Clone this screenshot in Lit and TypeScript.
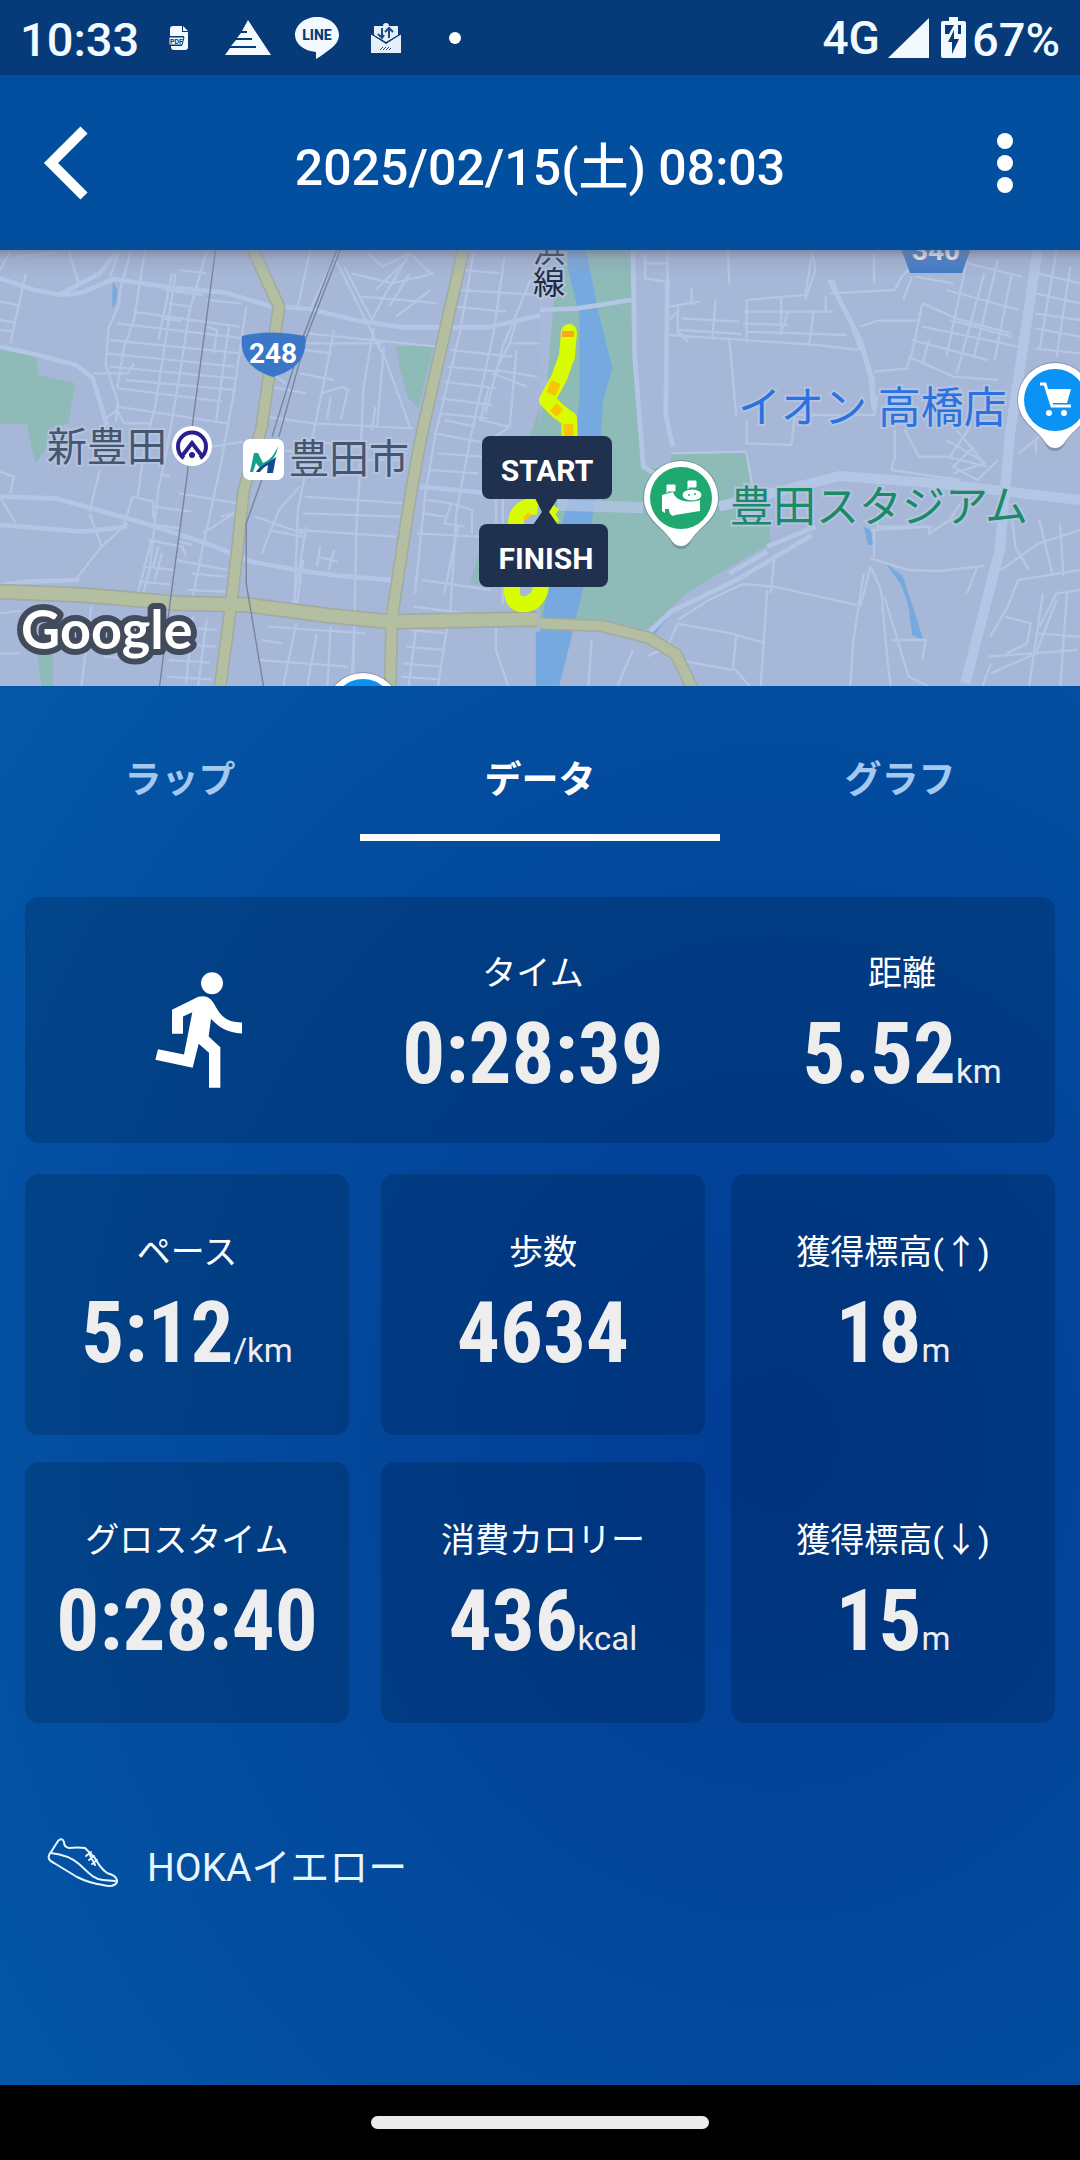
import { LitElement, css, html, svg, nothing } from "lit";
import { customElement, property } from "lit/decorators.js";

const statusIcons = [
  html`<svg width="22" height="26" viewBox="0 0 22 26" role="img" aria-label="PDF">
    <path d="M5 1h9v6h6v15a3 3 0 0 1-3 3H6a3 3 0 0 1-3-3v-1h11l2-10H2V4a3 3 0 0 1 3-3z" fill="#f2faff" />
    <path d="M15 1l5 5h-5z" fill="#f2faff" />
    <path d="M1 12h15l-2 8H1z" fill="#f2faff" stroke="#063a78" stroke-width="1" />
    <text x="2" y="19" font-size="7" font-weight="700" fill="#063a78">PDF</text>
  </svg>`,
  html`<svg width="46" height="35" viewBox="0 0 46 35" aria-hidden="true">
    <path d="M23 0l23 35H0l5-7h26v-2H6l5-6h16v-2H12l4-5h6v-2h-5z" fill="#f2faff" />
  </svg>`,
  html`<svg width="44" height="42" viewBox="0 0 44 42" role="img" aria-label="LINE">
    <path d="M22 0c12 0 22 8 22 18 0 8-7 13-14 18-4 3-7 5-9 6v-7C9 34 0 27 0 18 0 8 10 0 22 0z" fill="#f2faff" />
    <text x="22" y="23" text-anchor="middle" font-size="14" font-weight="800" fill="#063a78">LINE</text>
  </svg>`,
  html`<svg width="30" height="30" viewBox="0 0 30 30" aria-hidden="true">
    <path d="M12 3a3 3 0 0 1 6 0h9v9l-12 7L3 12V3z" fill="#e4effa" />
    <path d="M0 11l15 10 15-10v19H0z" fill="#e4effa" />
    <path d="M0 11l15 9 15-9" fill="none" stroke="#063a78" stroke-width="1" />
    <path d="M11 5v9m-4-3l4 4 2-3M18 15V6m-4 3l4-4 4 4" fill="none" stroke="#1f4a80" stroke-width="2" />
    <path d="M9 27l3-3m0 3l3-3m0 3l3-3m0 3l2-2" stroke="#1f4a80" stroke-width="1" />
  </svg>`,
  html`<svg width="12" height="12" viewBox="0 0 12 12" aria-hidden="true"><circle cx="6" cy="6" r="6" fill="#fff" /></svg>`,
];

const pin = (x: number, y: number, color: string, glyph: unknown = nothing) => svg`
  <g transform="translate(${x} ${y})">
    <path d="M0 51c-5 0-8-3-11-9C-17 30-38 23-38 0a38 38 0 0 1 76 0c0 23-21 30-27 42-3 6-6 9-11 9z" fill="#43536f" opacity=".35" />
    <path d="M0 48c-5 0-8-3-12-9C-20 28-37 20-37 0a37 37 0 0 1 74 0c0 20-17 28-25 39-4 6-7 9-12 9z" fill="#fff" />
    <circle r="31" fill="${color}" />
    ${glyph}
  </g>`;

const westTile = svg`
  <svg x="0" y="240" width="540" height="450" viewBox="0 0 1568 1350" preserveAspectRatio="none">
    <g class="park">
      <path d="M0 325l60 15 48 15v50l110 25-20 120-50 15-15 60-30 45-10-45-15-72H0z" />
      <path d="M1150 318h110l-45 185-30-30-22-80z" />
      <path d="M1568 500l-30 90h30zM1365 1030l25-90v95zM108 1240h45v110h-30z" />
    </g>
    <path d="M327 125l14 25-5 40-10 15z" class="water" />
    <path class="lane" d="M30 35L0 90M75 100L30 310M200 35L230 135M345 35l-25 75M380 35l-30 110-5 50-30 70-8 110 35 110-5 60M0 185l55 10M0 240l45 8M0 270l40 5M50 50l110-12M420 35l-30 200-30 90-20 120M510 100l-35 240-25 160-30 120-20 150M600 35l-50 180-30 200-40 240-20 90-25 240-20 80M715 200l-35 250-40 230-55 260-25 130M665 260l-15 110-22 170M340 250l370 45M320 300l380 40M312 340l370 40M320 380l360 35M365 420l320 30M345 445l300 40M340 500l320 50M385 215l310 45M490 190l60 10M470 235l55 8M520 90l80 10M480 150l110 15M600 180l100 10M600 260l30 10-10 70M270 400l100 0 20-30M300 540l40-30 20 40h80" />
    <path class="lane" d="M0 695l40 15-10 50M0 770l45 80M290 690l-30 125M260 820l35 100-80 105M370 850l-75 70M385 770l-25 85M385 770l60 15v50M465 700l30 10M445 800l110 15M420 850l100 15M430 900l100 20 10 30M440 900l-40 160M460 920l-15 60M415 980l90 10M405 1025l90 8M470 940l-20 80M510 960l150 30M555 1000l100 10M545 1050l110 5M520 905l40 10M0 1120l60-8M0 1240h60M265 1100l-30 250M240 1190l240 20M300 1250l140 12M500 1160l130 10M495 1210l130 10M490 1260l120 8M485 1310l130 8M560 1130l-20 200M600 1140l-25 200M460 300l40-200M555 630l150-25M640 830l70-20M520 760l170 30M590 880l90-60" />
    <path class="lane" d="M900 35l-35 165M960 80l-60 130M1000 80l85 170M970 50l150 310 70 200M1080 240l40-80 70-120 60 60M1020 100l120 30 120-30M1050 170l120 10 100 10M1090 150l80-80M1130 200l60-100M1150 230l100-80M1190 40l-80 40-40-40M970 270l-30 160-40 200-35 180-10 280M1085 265l-30 180-10 250-10 170-10 480M890 280l380 40M1110 310h-220M885 330l80 10M870 400l100 20M935 460l60-20 15 10-20 90M960 470l-10 70M1115 320l-20 240M1090 500l-10 70M780 440l110 20M770 530l140 20 290 15M790 400l40 30M760 620l120 20M880 600l300 40M885 660h290M885 770l290 20M880 820l280 10M870 870l280 20M760 940l50-130 60-70M780 870l100 20M740 830l140 50M890 860l-40 240M880 960l-20 150M930 920l-10 60M970 930l-15 60M920 950l60 15M780 1160l280 20M760 1200l60 10M750 1260l260 20M860 1150l-40 200M920 1180l-30 170M960 1160l-10 190M1030 1140l-10 210" />
    <path class="lane" d="M1375 40l-40 240-70 300-30 180-30 300M1465 50l-30 220-70 330-40 220-20 340M1540 120l-80 200-50 200M1330 150l240 15M1350 90l100 10M1320 200l150 15M1310 330l180 20M1300 380l150 15M1290 425l150 20M1280 475l150 20M1275 520l140 15M1500 240l-20 70h88M1480 310l-40 80 120 20M1430 400l100 40M1500 330l-20 230-70 50M1420 440l-25 100 80 20M1380 560l-90-20M1260 580l160 30M1270 640l130 10M1250 690l140 10M1240 780l70 10 60 20v70M1310 790l-20 60 60 10M1230 820l60 10M1210 880l180 10M1225 1020l200 30M1330 860l-40 200M1190 1170l110 10M1180 1220l110 10M1170 1270l110 10M1165 1310l110 8M1210 1150l-25 200M1300 1150l-30 200M1440 1160v70l40 120M1200 1100l230 30M1440 750v100M1460 740v350" />
    <g class="street">
      <path d="M0 115l100 35 80 15 60-8 90-40 160 25 160 15 130 40 120 10 140 35 130 20h250l250-60M0 320l110 25 110 30 50 40 40 140M170 165L290 100l45-60" />
      <path d="M0 770l160 5 90 25 170 50 180 60 130 55 160 30 90 12 180 15M0 855l240 20 130-15M0 1035l80-10 150-5M1220 740l200 20" />
    </g>
    <g class="highway-edge">
      <path d="M735 30l75 170-50 360-52 190-35 330-35 270" />
      <path d="M1345 30l-50 230-72 330-30 170-55 370-5 220" />
      <path d="M0 1055l240 10 280 25 200 5 220 30 190 20 430-8" stroke-width="48" />
    </g>
    <g class="highway">
      <path d="M735 30l75 170-50 360-52 190-35 330-35 270" />
      <path d="M1345 30l-50 230-72 330-30 170-55 370-5 220" />
      <path d="M0 1055l240 10 280 25 200 5 220 30 190 20 430-8" stroke-width="38" />
    </g>
    <path class="rail" d="M626 30l-68 530-15 150-47 360-34 280" />
    <path class="rail" d="M978 30L880 290l-90 300M988 30L890 290l-80 300M770 690l-55 160v180l52 320" />
    <path d="M1556 1175h12v175h-12z" class="water" />
  </svg>`;

const eastTile = svg`
  <svg x="540" y="240" width="540" height="450" viewBox="0 0 1568 1350" preserveAspectRatio="none">
    <g class="park">
      <path d="M60 30h205l5 320 25 330 85 10V640h225l15 120 40 40 10 110-240 145-120 115-60-15-180-20H0V560l40-360z" />
    </g>
    <path d="M0 150h40l-20 300-20 60z" fill="#a8b9d9" />
    <path class="water" d="M82 30h52l32 170 44 185-28 100-8 200-22 150-25 200-34 150-40 165H0v-180l42-240 45-160 28-300v-240L80 80z" />
    <path class="water" d="M940 860l20 10 8 45h-15zM1003 968l50 40 35 110 25 82-32-15-12-90-20-60zM310 1180l65-50-40 50z" />
    <path class="lane" d="M305 40v75l60 10M370 30v90M310 70h60M375 200l90-15M440 145v50M400 200v75l30 30M375 240l30-30M510 180l-10 120M410 235l170 10M405 270l180 12M600 180v130M590 215h260M700 175v110M600 180l170-15 20-120M590 250l130 5M795 210l-15 110M830 170v45h20M770 180l30-90-10-60M545 30l5 100M850 120l70 180 10 30M375 285l430 30 120 15M600 275l290 10M720 215l-15 50" />
    <path class="lane" d="M970 40v90M840 160l190-10 20-40 60-60M930 260l50-18h125M1110 190l-30 150-15 40M1110 190l110 50 150 40M1080 300l220 60M1080 110l-25 70M1240 60l-60 290M1290 100l-80 300M1330 60l-70 290M1370 100l-50 260M1180 150l210 60M1190 240l180 50M1130 300l-20 70M1070 350l130 60 130 10M1110 260l280 60M1200 60l200 50M1090 110l110 20M1500 30l-50 300M1540 80l-40 270M1568 130l-120-30M1568 190l-130-30M1568 240l-130-20M1568 290l-130-25M1568 340l-130-15" />
    <path class="lane" d="M550 300l20 230M600 540v70l130 5 10-90h230l10-60M930 300l40 120v90M970 395l100-10M1030 570v90M1060 570l40 80h80l120 30M1020 690l200 30M1030 650l-10 40M1250 560l-60 90M1180 600l100 60M1210 570l80 100-90 30M1260 620l-60 60 70 40 60-60M1390 640l60-50M1440 600v40M380 640l220-5M600 640l20 120M640 770l140-25M980 820v40h150v20l60-40 30-50M960 870l180-10" />
    <path class="lane" d="M960 955l110 35 90 3 130-15M960 980l30 70 20 220 10 80M1000 1070l70 240 60 30M930 1100l30-120M1270 980l-30 80M1500 1060l-50 100M1370 830l10 90 40 70M1450 840l40 170M1510 850l10 160M1568 870l-120 40-110 80M1568 990l-180 30-30 80-50 90M1350 1130l75 20-10 60-60 30M1500 1060l68-10M1440 1180l128 10M1300 1250l260-20M1310 1300l130-60 60-160M1460 1060l-40 280M1530 1060l-20 290M1020 1200h100l-10 60M1280 1350l30-80" />
    <path class="lane" d="M400 1140l90-60 100-48 90 8 240 55M395 1150l160 30 100 30M570 1190l-10 90 50 60M400 1260l160 30M400 1150l-30 70-60 30M270 1230l-50 120M150 1200l-10 150M660 1050l-20 300M680 960l-10 100M940 1000l-30 200-10 150M970 870v80" />
    <g class="street">
      <path d="M0 210l110-5 155-25M270 30l5 320 25 330 40 25M370 120l-5 400 20 100M840 120l90 180 30 110 10 100" />
      <path d="M660 935l-110 65M320 1175l60-60 200-100 210-130M660 920l140-60" />
      <path d="M50 795l250 8" stroke-width="34" opacity=".75" />
      <path d="M520 800l350-92 280 22 418 50" stroke-width="30" />
      <path d="M1445 30l-80 550-30 350-100 400" stroke-width="30" />
    </g>
    <path class="highway-edge" d="M0 1150l180 8 135 35 80 50 50 107" stroke-width="46" />
    <path class="highway" d="M0 1150l180 8 135 35 80 50 50 107" stroke-width="36" />
  </svg>`;

@customElement("course-map")
export class CourseMap extends LitElement {
  static styles = css`
    :host { display: block; background: #a6b7d7; }
    .map { display: block; width: 100%; height: 436px; font-family: Roboto, "Noto Sans CJK JP", sans-serif; }
    .park { fill: #8ebab8; }
    .water { fill: #76a9df; }
    .lane { fill: none; stroke: #b5c7e4; stroke-width: 7; }
    .street { fill: none; stroke: #b3c6e5; stroke-width: 14; stroke-linejoin: round; }
    .highway-edge { fill: none; stroke: #a2ab9f; stroke-width: 38; stroke-linejoin: round; }
    .highway { fill: none; stroke: #b4bea0; stroke-width: 29; stroke-linejoin: round; }
    .rail { fill: none; stroke: #75849f; stroke-width: 4; }
    .place { font-size: 40px; paint-order: stroke; stroke: #b3c3e0; stroke-width: 4px; }
    .large { font-size: 43px; }
    .road { font-size: 32px; }
    .shield { font-size: 28px; font-weight: 700; fill: #fff; }
    .flag { font-size: 30px; font-weight: 700; fill: #fff; }
    .google { font-family: Lato, sans-serif; font-size: 54px; font-weight: 700; fill: #fff; paint-order: stroke; stroke: #424b5b; stroke-width: 12px; stroke-linejoin: round; }
  `;

  render() {
    return html`<svg class="map" viewBox="0 250 1080 436" preserveAspectRatio="xMidYMid slice" role="img" aria-label="コースマップ">
      <defs>
        <linearGradient id="shade" x1="0" y1="0" x2="0" y2="1">
          <stop offset="0" stop-color="#6a7088" stop-opacity=".65" />
          <stop offset=".35" stop-color="#8a8fa8" stop-opacity=".3" />
          <stop offset="1" stop-color="#9aa3bf" stop-opacity="0" />
        </linearGradient>
      </defs>
      ${westTile} ${eastTile}

      <path d="M242 336q31-7 63 0c3 22-10 35-32 41-20-6-34-19-31-41z" fill="#3a77c8" />
      <text class="shield" x="273" y="363" text-anchor="middle">248</text>
      <path d="M898 240h76l-12 33h-52z" fill="#3a77c8" />
      <text class="shield" x="936" y="260" text-anchor="middle">340</text>

      <g fill="none" stroke-width="16" stroke-linejoin="round">
        <path d="M569 332l-2 24-8 22-12 22 11 11 11 8 1 26" stroke="#d8fc02" stroke-linecap="round" />
        <path d="M538 507c-13-2-21 4-22 15l-4 70c1 14 12 14 20 10 6-4 9-9 9-19" stroke="#d8fc02" />
        <path d="M556 507l-5 7 5 9" stroke="#d8fc02" stroke-width="8" />
        <path d="M568 331v6" stroke="#ffa61a" stroke-width="12" />
        <path d="M556 382l-5 12M553 407l7 6M568 424l1 12" stroke="#ffb808" stroke-width="10" opacity=".8" />
        <path d="M524 519l6-5" stroke="#ffc400" stroke-width="4" />
      </g>

      <g fill="#20304f">
        <path d="M535 498h23l-9 14 9 13h-25l9-13z" />
        <rect x="482" y="436" width="130" height="63" rx="8" />
        <rect x="479" y="524" width="129" height="63" rx="8" />
      </g>
      <text class="flag" x="547" y="481" text-anchor="middle">START</text>
      <text class="flag" x="546" y="569" text-anchor="middle">FINISH</text>

      <text class="place" x="47" y="461" fill="#47566f">新豊田</text>
      <circle cx="192" cy="446" r="20" fill="#fff" />
      <path d="M184 458a14 14 0 1 1 16 0M182 456l10-13 10 13" fill="none" stroke="#2b1f8f" stroke-width="4" />
      <circle cx="192" cy="455" r="3" fill="#2b1f8f" />
      <rect x="243" y="439" width="41" height="41" rx="7" fill="#fff" />
      <path d="M250 472l4-19h4l5 10c7-3 12-9 15-17-1 10-7 17-18 22l-4-5-3 9z" fill="#14a08a" />
      <path d="M256 472c3-6 9-7 20-15l-3 16h-6l1-8c-4 2-6 4-8 7z" fill="#15488f" />
      <text class="place" x="289" y="473" fill="#47566f">豊田市</text>
      <text class="place road" x="533" y="262" fill="#1c2a42">浜</text>
      <text class="place road" x="533" y="294" fill="#1c2a42">線</text>

      <text class="place large" x="738" y="423" fill="#2b72e0">イオン 高橋店</text>
      ${pin(1055, 400, "#0a93f5", svg`
        <path d="M-15-16h5l7 22h19" fill="none" stroke="#fff" stroke-width="3" />
        <path d="M-9-11h25L12 3H-5z" fill="#fff" />
        <circle cx="-6" cy="13" r="3" fill="#fff" /><circle cx="9" cy="13" r="3" fill="#fff" />`)}
      <text class="place large" x="730" y="522" fill="#1b8a68">豊田スタジアム</text>
      ${pin(681, 498, "#1fa971", svg`
        <path d="M-19-3l11-3c2 7 10 12 27 8v11L-6 17c-2 2-6 0-6-6h-4v4l-3-2z" fill="#fff" />
        <ellipse cx="11" cy="-3" rx="10" ry="6" fill="#fff" stroke="#1fa971" stroke-width="1" />
        <path d="M-14-5v-8h8v6h-7M7-9v-8h8v6h-7" fill="#fff" stroke="#fff" stroke-width="1" />
        <circle cx="8" cy="-3" r="1" fill="#1fa971" /><circle cx="14" cy="-4" r="1" fill="#1fa971" />`)}
      ${pin(363, 710, "#0a93f5")}

      <text class="google" x="21" y="649">Google</text>
      <rect x="-400" y="250" width="1880" height="28" fill="url(#shade)" />
    </svg>`;
  }
}

@customElement("stat-item")
export class StatItem extends LitElement {
  @property() label = "";
  @property() value = "";
  @property() unit = "";

  static styles = css`
    :host { display: flex; flex-direction: column; align-items: center; gap: 12px; }
    .label { font-size: 34px; line-height: 50px; color: #fff; white-space: nowrap; }
    .value { display: flex; align-items: baseline; height: 88px; font: 700 85px/88px "Roboto Condensed", "Liberation Sans Narrow", Roboto, sans-serif; color: #eee; }
    .unit { font: 400 33px/33px Roboto, sans-serif; color: #eee; }
  `;

  render() {
    return html`<div class="label">${this.label}</div>
      <div class="value">${this.value}${this.unit ? html`<span class="unit">${this.unit}</span>` : nothing}</div>`;
  }
}

@customElement("app-root")
export class AppRoot extends LitElement {
  @property() activeTab = "データ";

  static styles = css`
    :host { display: block; }
    * { box-sizing: border-box; }
    .screen { display: flex; flex-direction: column; min-height: 100vh; background: #034f9f; color: #fff; font-family: Roboto, "Noto Sans CJK JP", sans-serif; }
    .status { display: flex; align-items: center; justify-content: space-between; height: 75px; padding: 0 20px; background: #063a78; color: #f2faff; }
    .group { display: flex; align-items: center; }
    .clock { font-size: 47px; line-height: 54px; font-weight: 500; padding-top: 4px; margin-right: 5px; }
    .slot { display: flex; justify-content: center; width: 69px; }
    .network { font-size: 46px; line-height: 54px; font-weight: 500; margin-right: 8px; }
    .signal { margin-right: 12px; }
    .battery { margin-right: 6px; }
    .percent { font-size: 47px; line-height: 54px; font-weight: 500; padding-top: 4px; }
    .header { display: grid; grid-template-columns: 72px 1fr 72px; align-items: center; height: 175px; padding: 0 38px; }
    .title { margin: 0; padding-top: 10px; font-size: 50px; line-height: 60px; font-weight: 500; text-align: center; white-space: nowrap; }
    .icon-button { display: flex; align-items: center; height: 96px; padding: 0; border: 0; background: none; }
    .more { justify-content: flex-end; }
    .content { flex: 1; background: radial-gradient(ellipse 95% 85% at 72% 54%, #013c94, #034d9f 65%, #0458a8); }
    .tabs { display: grid; grid-template-columns: repeat(3, 1fr); }
    .tab { padding: 70px 0 28px; border: 0; border-bottom: 7px solid transparent; background: none; font: 700 37px/50px Roboto, "Noto Sans CJK JP", sans-serif; color: #a4c8f0; }
    .tab.active { color: #fff; border-color: #fff; }
    .panel { padding: 56px 25px 0; }
    .card { border-radius: 14px; background: rgba(0, 8, 28, .19); }
    .summary { display: grid; grid-template-columns: 350fr 316fr 58fr 306fr; align-items: center; padding: 51px 0 45px; margin-bottom: 31px; }
    .summary .distance { grid-column: 4; }
    .runner { justify-self: center; margin: 14px 4px 0 0; }
    .stats { display: grid; grid-template-columns: 1fr 32px 1fr 26px 1fr; row-gap: 27px; }
    .stat { padding: 53px 0 58px; }
    .first { grid-column: 1; }
    .second { grid-column: 3; }
    .climb { grid-column: 5; grid-row: 1 / span 2; display: flex; flex-direction: column; justify-content: space-between; }
    .shoe { display: flex; align-items: center; gap: 29px; padding: 114px 21px 60px; font-size: 39px; line-height: 60px; color: #e8f6ff; }
    .gesture { display: flex; align-items: center; justify-content: center; height: 75px; background: #000; }
    .pill { width: 338px; height: 13px; border-radius: 7px; background: #ebebeb; }
  `;

  private select(tab: string) {
    this.activeTab = tab;
  }

  render() {
    return html`<div class="screen">
      <div class="status">
        <div class="group">
          <span class="clock">10:33</span>
          ${statusIcons.map((icon) => html`<span class="slot">${icon}</span>`)}
        </div>
        <div class="group">
          <span class="network">4G</span>
          <svg class="signal" width="41" height="40" viewBox="0 0 41 40" aria-hidden="true"><path d="M41 0v40H0z" fill="#f2faff" /></svg>
          <svg class="battery" width="25" height="41" viewBox="0 0 25 41" aria-hidden="true">
            <path d="M8 0h9v4h6a2 2 0 0 1 2 2v33a2 2 0 0 1-2 2H2a2 2 0 0 1-2-2V6a2 2 0 0 1 2-2h6z" fill="#f2faff" />
            <path d="M4 8h9l-5 9H4zM15 8h5v9h-3V8zM13 13v9h5l-7 15v-12H7z" fill="#063a78" />
          </svg>
          <span class="percent">67%</span>
        </div>
      </div>

      <header class="header">
        <button class="icon-button" aria-label="戻る">
          <svg width="56" height="76" viewBox="0 0 56 76" aria-hidden="true"><path d="M46 5L13 38l33 33" fill="none" stroke="#fff" stroke-width="10" /></svg>
        </button>
        <h1 class="title">2025/02/15(土) 08:03</h1>
        <button class="icon-button more" aria-label="メニュー">
          <svg width="72" height="60" viewBox="0 0 72 60" fill="#fff" aria-hidden="true"><circle cx="35" cy="8" r="8" /><circle cx="35" cy="30" r="8" /><circle cx="35" cy="52" r="8" /></svg>
        </button>
      </header>

      <course-map></course-map>

      <main class="content">
        <div class="tabs" role="tablist">
          ${["ラップ", "データ", "グラフ"].map((tab) => html`<button role="tab" class="tab ${tab === this.activeTab ? "active" : ""}"
            aria-selected=${tab === this.activeTab} @click=${() => this.select(tab)}>${tab}</button>`)}
        </div>
        <div class="panel" role="tabpanel">
          <section class="card summary">
            <svg class="runner" width="87" height="116" viewBox="75 65 261 347" fill="#fff" role="img" aria-label="ラン">
              <circle cx="246" cy="98" r="33" />
              <path d="M126 178l79-39c22-6 38 2 50 26 20 38 40 50 81 51v33c-44-2-70-18-93-44l-7 53 35 32v122h-34V307l-31-27-18 72-112-24 8-32 78 16 25-127-28 13v52h-33z" />
            </svg>
            <stat-item label="タイム" value="0:28:39"></stat-item>
            <stat-item class="distance" label="距離" value="5.52" unit="km"></stat-item>
          </section>
          <section class="stats">
            <stat-item class="card stat first" label="ペース" value="5:12" unit="/km"></stat-item>
            <stat-item class="card stat second" label="歩数" value="4634"></stat-item>
            <div class="card climb">
              <stat-item class="stat" label="獲得標高(↑)" value="18" unit="m"></stat-item>
              <stat-item class="stat" label="獲得標高(↓)" value="15" unit="m"></stat-item>
            </div>
            <stat-item class="card stat first" label="グロスタイム" value="0:28:40"></stat-item>
            <stat-item class="card stat second" label="消費カロリー" value="436" unit="kcal"></stat-item>
          </section>
          <div class="shoe">
            <svg width="72" height="62" viewBox="0 0 72 62" fill="none" stroke="#e8f6ff" stroke-width="2" stroke-linecap="round" stroke-linejoin="round" aria-hidden="true">
              <path d="M5 15L12 4q4-4 6 1 0 5 5 6 9-1 16 0l10 10q5 10 12 15 11 3 10 9-3 6-14 3-14-2-26-8L8 26Q-1 22 5 15z" />
              <path d="M5 16c9 1 20 4 28 11 9 8 14 15 24 16l12 1" />
              <path d="M40 19l5-4M43 23l5-4M46 27l5-4M43 16l6 12" />
            </svg>
            <span>HOKAイエロー</span>
          </div>
        </div>
      </main>
      <footer class="gesture"><div class="pill"></div></footer>
    </div>`;
  }
}
